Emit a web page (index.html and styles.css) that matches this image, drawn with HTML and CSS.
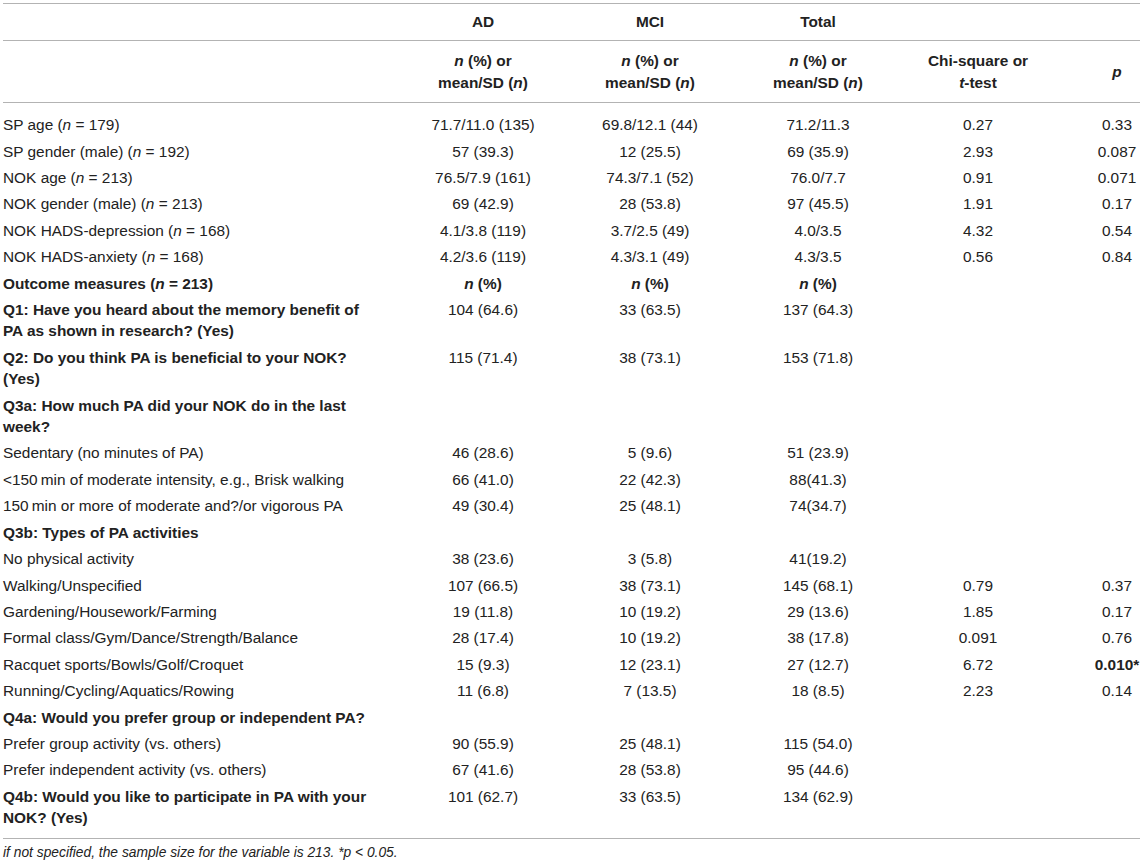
FILE: index.html
```html
<!DOCTYPE html>
<html lang="en">
<head>
<meta charset="utf-8">
<title>Table</title>
<link rel="stylesheet" href="styles.css">
</head>
<body>
<div class="page">
<table class="stats">
<colgroup>
<col class="c-label"><col class="c-ad"><col class="c-mci"><col class="c-total"><col class="c-chi"><col class="c-p">
</colgroup>
<thead>
<tr class="h1"><th class="label"></th><th>AD</th><th>MCI</th><th>Total</th><th></th><th class="pcol"></th></tr>
<tr class="h2"><th class="label"></th><th><i>n</i> (%) or<br>mean/SD (<i>n</i>)</th><th><i>n</i> (%) or<br>mean/SD (<i>n</i>)</th><th><i>n</i> (%) or<br>mean/SD (<i>n</i>)</th><th>Chi-square or<br><i>t</i>-test</th><th class="pcol"><i>p</i></th></tr>
</thead>
<tbody>
<tr class="first"><td class="label">SP age (<i>n</i> = 179)</td><td>71.7/11.0 (135)</td><td>69.8/12.1 (44)</td><td>71.2/11.3</td><td>0.27</td><td class="pcol">0.33</td></tr>
<tr><td class="label">SP gender (male) (<i>n</i> = 192)</td><td>57 (39.3)</td><td>12 (25.5)</td><td>69 (35.9)</td><td>2.93</td><td class="pcol">0.087</td></tr>
<tr><td class="label">NOK age (<i>n</i> = 213)</td><td>76.5/7.9 (161)</td><td>74.3/7.1 (52)</td><td>76.0/7.7</td><td>0.91</td><td class="pcol">0.071</td></tr>
<tr><td class="label">NOK gender (male) (<i>n</i> = 213)</td><td>69 (42.9)</td><td>28 (53.8)</td><td>97 (45.5)</td><td>1.91</td><td class="pcol">0.17</td></tr>
<tr><td class="label">NOK HADS-depression (<i>n</i> = 168)</td><td>4.1/3.8 (119)</td><td>3.7/2.5 (49)</td><td>4.0/3.5</td><td>4.32</td><td class="pcol">0.54</td></tr>
<tr><td class="label">NOK HADS-anxiety (<i>n</i> = 168)</td><td>4.2/3.6 (119)</td><td>4.3/3.1 (49)</td><td>4.3/3.5</td><td>0.56</td><td class="pcol">0.84</td></tr>
<tr class="bold"><td class="label">Outcome measures (<i>n</i> = 213)</td><td><i>n</i> (%)</td><td><i>n</i> (%)</td><td><i>n</i> (%)</td><td></td><td class="pcol"></td></tr>
<tr><td class="label b">Q1: Have you heard about the memory benefit of PA as shown in research? (Yes)</td><td>104 (64.6)</td><td>33 (63.5)</td><td>137 (64.3)</td><td></td><td class="pcol"></td></tr>
<tr><td class="label b">Q2: Do you think PA is beneficial to your NOK? (Yes)</td><td>115 (71.4)</td><td>38 (73.1)</td><td>153 (71.8)</td><td></td><td class="pcol"></td></tr>
<tr><td class="label b">Q3a: How much PA did your NOK do in the last week?</td><td></td><td></td><td></td><td></td><td class="pcol"></td></tr>
<tr><td class="label">Sedentary (no minutes of PA)</td><td>46 (28.6)</td><td>5 (9.6)</td><td>51 (23.9)</td><td></td><td class="pcol"></td></tr>
<tr><td class="label">&lt;150&#8201;min of moderate intensity, e.g., Brisk walking</td><td>66 (41.0)</td><td>22 (42.3)</td><td>88(41.3)</td><td></td><td class="pcol"></td></tr>
<tr><td class="label">150&#8201;min or more of moderate and?/or vigorous PA</td><td>49 (30.4)</td><td>25 (48.1)</td><td>74(34.7)</td><td></td><td class="pcol"></td></tr>
<tr><td class="label b">Q3b: Types of PA activities</td><td></td><td></td><td></td><td></td><td class="pcol"></td></tr>
<tr><td class="label">No physical activity</td><td>38 (23.6)</td><td>3 (5.8)</td><td>41(19.2)</td><td></td><td class="pcol"></td></tr>
<tr><td class="label">Walking/Unspecified</td><td>107 (66.5)</td><td>38 (73.1)</td><td>145 (68.1)</td><td>0.79</td><td class="pcol">0.37</td></tr>
<tr><td class="label">Gardening/Housework/Farming</td><td>19 (11.8)</td><td>10 (19.2)</td><td>29 (13.6)</td><td>1.85</td><td class="pcol">0.17</td></tr>
<tr><td class="label">Formal class/Gym/Dance/Strength/Balance</td><td>28 (17.4)</td><td>10 (19.2)</td><td>38 (17.8)</td><td>0.091</td><td class="pcol">0.76</td></tr>
<tr><td class="label">Racquet sports/Bowls/Golf/Croquet</td><td>15 (9.3)</td><td>12 (23.1)</td><td>27 (12.7)</td><td>6.72</td><td class="pcol b">0.010*</td></tr>
<tr><td class="label">Running/Cycling/Aquatics/Rowing</td><td>11 (6.8)</td><td>7 (13.5)</td><td>18 (8.5)</td><td>2.23</td><td class="pcol">0.14</td></tr>
<tr><td class="label b">Q4a: Would you prefer group or independent PA?</td><td></td><td></td><td></td><td></td><td class="pcol"></td></tr>
<tr><td class="label">Prefer group activity (vs. others)</td><td>90 (55.9)</td><td>25 (48.1)</td><td>115 (54.0)</td><td></td><td class="pcol"></td></tr>
<tr><td class="label">Prefer independent activity (vs. others)</td><td>67 (41.6)</td><td>28 (53.8)</td><td>95 (44.6)</td><td></td><td class="pcol"></td></tr>
<tr class="last"><td class="label b">Q4b: Would you like to participate in PA with your NOK? (Yes)</td><td>101 (62.7)</td><td>33 (63.5)</td><td>134 (62.9)</td><td></td><td class="pcol"></td></tr>
</tbody>
</table>
<p class="note">if not specified, the sample size for the variable is 213. *p &lt; 0.05.</p>
</div>
</body>
</html>
```

FILE: styles.css
```css
html, body {
  margin: 0;
  padding: 0;
  background: #ffffff;
}

body {
  font-family: "Liberation Sans", Arial, Helvetica, sans-serif;
  color: #222222;
}

.page {
  padding: 3px 3px 0 3px;
}

.stats {
  width: 1137px;
  border-collapse: collapse;
  table-layout: fixed;
  font-size: 15.4px;
  line-height: 21.4px;
}

.c-label { width: 397px; }
.c-ad { width: 166px; }
.c-mci { width: 168px; }
.c-total { width: 168px; }
.c-chi { width: 152px; }
.c-p { width: 86px; }

.stats th,
.stats td {
  padding: 2.5px 0;
  text-align: center;
  vertical-align: top;
  font-weight: normal;
}

.stats th {
  font-weight: bold;
  vertical-align: middle;
}

.stats .label {
  text-align: left;
  padding-right: 21px;
}

.stats .pcol {
  padding-left: 40px;
}

.stats .b,
.stats tr.bold td {
  font-weight: bold;
}

.stats tr.h1 th {
  padding-top: 7.3px;
  padding-bottom: 7.3px;
  border-top: 1px solid #b3b3b3;
  border-bottom: 1px solid #b3b3b3;
}

.stats tr.h2 th {
  padding-top: 9.1px;
  padding-bottom: 9.1px;
  border-bottom: 1px solid #b3b3b3;
}

.stats tr.first td {
  padding-top: 11.2px;
}

.stats tr.last td {
  padding-bottom: 9.5px;
  border-bottom: 1px solid #b3b3b3;
}

.note {
  margin: 0;
  padding-top: 5px;
  font-size: 13.8px;
  line-height: 18px;
  font-style: italic;
}
```
